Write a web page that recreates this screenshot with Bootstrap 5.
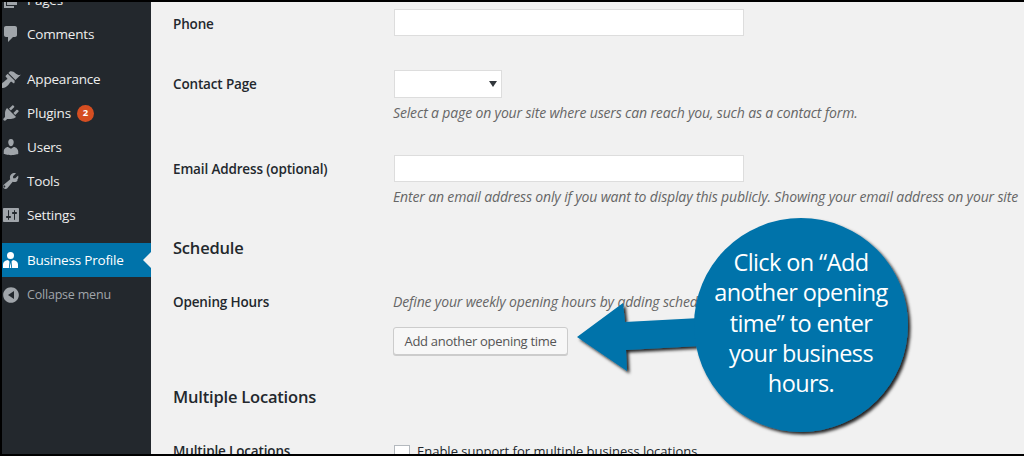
<!DOCTYPE html>
<html lang="en">
<head>
  <meta charset="utf-8">
  <title>Business Profile</title>
  <link href="https://cdn.jsdelivr.net/npm/bootstrap@5.3.0/dist/css/bootstrap.min.css" rel="stylesheet">
  <style>
    html, body { height: 456px; overflow: hidden; }
    body { font-family: "Open Sans", "Noto Sans", sans-serif; font-size: 13px; background: #000; }
    .shot-frame { height: 456px; padding: 2px 0 2px 2px; position: relative; }
    .shot-page { height: 100%; overflow: hidden; background: #f1f1f1; }
    .wp-side { width: 149px; background: #23282d; color: #eee; overflow: hidden; }
    .wp-menu { margin: -19px 0 0; padding: 0; list-style: none; }
    .wp-menu li { height: 34px; display: flex; align-items: center; position: relative; font-size: 13.5px; letter-spacing: -.2px; }
    .wp-menu li svg { width: 20px; height: 20px; margin: 0 6px 0 -1px; fill: #a0a5aa; flex: none; }
    .wp-menu li.menu-gap { margin-top: 11px; }
    .wp-menu li.menu-active { background: #0073aa; color: #fff; }
    .wp-menu li.menu-active svg { fill: #fff; }
    .wp-menu li.menu-active::after { content: ""; position: absolute; right: 0; top: 9px; border: 8px solid transparent; border-right-color: #f1f1f1; border-left: 0; }
    .wp-menu li.menu-collapse { color: #a0a5aa; font-size: 12.5px; padding-top: 2px; }
    .plugin-count { width: 17px; height: 17px; border-radius: 50%; background: #d54e21; color: #fff; font-size: 9.5px; font-weight: 700; margin-left: 6px; letter-spacing: 0; }
    .wp-main { padding-left: 22px; color: #23282d; min-width: 0; overflow: hidden; }
    .field-row { display: flex; }
    .field-label { width: 221px; flex: none; font-weight: 600; font-size: 13.5px; letter-spacing: -.15px; }
    .field-input { width: 350px; height: 27px; background: #fff; border: 1px solid #ddd; display: block; }
    .field-select { width: 108px; height: 28px; background: #fff; border: 1px solid #ddd; position: relative; }
    .field-select::after { content: ""; position: absolute; right: 4px; top: 10px; border: 4px solid transparent; border-top: 6px solid #32373c; border-bottom: 0; }
    .field-note { font-style: italic; font-size: 14px; color: #666; white-space: nowrap; letter-spacing: -.15px; margin-left: -1px; }
    .section-title { font-size: 16.5px; font-weight: 600; letter-spacing: -.2px; margin: 0; color: #23282d; line-height: 22px; }
    .add-time { height: 28px; width: 175px; background: #f7f7f7; border: 1px solid #ccc; border-radius: 3px; color: #555; font-size: 13px; padding: 0; letter-spacing: -.3px; box-shadow: 0 1px 0 #ccc; margin-left: -1px; }
    .fake-check { width: 16px; height: 16px; background: #fff; border: 1px solid #b4b9be; display: inline-block; flex: none; margin-top: 3px; }
    .callout-art { position: absolute; left: 0; top: 0; width: 1024px; height: 456px; pointer-events: none; }
    .callout-text { position: absolute; left: 695px; top: 247px; width: 212px; text-align: center; color: #fff; font-family: "Open Sans", sans-serif; font-size: 23.5px; line-height: 30.3px; letter-spacing: -.6px; }
    .phone-row { padding-top: 9px; line-height: 27px; }
    .phone-row .field-input { margin-top: -2px; }
    .contact-row { margin-top: 32px; line-height: 28px; }
    .contact-row .field-note { line-height: 18px; margin-top: 6px !important; }
    .email-row { margin-top: 33px; line-height: 27px; }
    .email-row .field-label { padding-top: 1px; }
    .email-row .field-note { line-height: 18px; margin-top: 6px !important; }
    .schedule-title { margin-top: 31px; }
    .hours-row { margin-top: 34px; line-height: 18px; }
    .hours-btn { margin-top: 16px; }
    .locations-title { margin-top: 31px; }
    .locations-row { margin-top: 34px; line-height: 18px; }
    .locations-check { gap: 7px; }
  </style>
</head>
<body>
  <div class="shot-frame">
    <div class="shot-page d-flex">
      <!-- admin menu -->
      <div class="wp-side flex-shrink-0">
        <ul class="wp-menu">
          <li>
            <svg viewBox="0 0 20 20"><path d="M6 15V2h10v13H6zm-1 1h8v2H3V5h2v11z"/></svg>
            <span>Pages</span>
          </li>
          <li>
            <svg viewBox="0 0 20 20"><path d="M5 2h9c1.100 0 2 .900 2 2v7c0 1.100-.900 2-2 2h-2l-5 5v-5H5c-1.100 0-2-.900-2-2V4c0-1.100.900-2 2-2z"/></svg>
            <span>Comments</span>
          </li>
          <li class="menu-gap">
            <svg viewBox="0 0 20 20"><path d="M14.480 11.060 7.410 3.990l1.500-1.500c.500-.560 2.300-.470 3.510.320 1.210.800 1.430 1.280 2.910 2.100 1.180.640 2.450 1.260 4.450.850zm-.710.710L6.700 4.700 4.930 6.470c-.390.390-.390 1.020 0 1.410l1.060 1.060c.390.390.390 1.030 0 1.420-.600.600-1.430 1.110-2.210 1.690-.350.260-.700.530-1.010.840C1.430 13.230 0 15.780 0 17c0 1.100.900 2 2 2 1.220 0 3.770-1.430 5.010-2.760.310-.310.580-.660.840-1.010.580-.780 1.090-1.610 1.690-2.210.390-.390 1.030-.390 1.420 0l1.060 1.060c.390.390 1.020.390 1.410 0z"/></svg>
            <span>Appearance</span>
          </li>
          <li>
            <svg viewBox="0 0 20 20"><path d="M13.110 4.360 9.870 7.600 8 5.730l3.240-3.240c.350-.340 1.050-.200 1.560.320.520.510.660 1.210.310 1.550zm-8 1.770.910-1.120 9.010 9.010-1.190.840c-.710.710-2.630 1.160-3.820 1.160H6.140L4.900 17.260c-.590.590-1.540.590-2.120 0-.590-.580-.590-1.530 0-2.120l1.240-1.240v-3.880c0-1.130.520-3.090 1.090-3.890zm7.260 3.970 3.240-3.240c.340-.350 1.040-.210 1.550.310.520.510.660 1.210.310 1.560l-3.240 3.250z"/></svg>
            <span>Plugins</span>
            <span class="plugin-count d-flex align-items-center justify-content-center">2</span>
          </li>
          <li>
            <svg viewBox="0 0 20 20"><path d="M10 9.250c-2.270 0-2.730-3.440-2.730-3.440C7 4.020 7.820 2 9.970 2c2.160 0 2.980 2.020 2.710 3.810 0 0-.410 3.440-2.680 3.440zm0 2.570L12.720 10c2.390 0 4.520 2.330 4.520 4.530v2.490s-3.650 1.130-7.240 1.130c-3.650 0-7.240-1.130-7.240-1.130v-2.490c0-2.250 1.940-4.480 4.150-4.480z"/></svg>
            <span>Users</span>
          </li>
          <li>
            <svg viewBox="0 0 20 20"><path fill-rule="evenodd" d="M16.680 9.770c-1.340 1.340-3.300 1.670-4.950.990l-5.410 6.520c-.990.990-2.590.990-3.580 0s-.990-2.590 0-3.570l6.520-5.420c-.680-1.650-.350-3.610.990-4.950 1.280-1.280 3.120-1.640 4.720-1.110l-2.900 2.900.070 2.090 2.090.070 2.900-2.900c.530 1.600.170 3.440-1.110 4.720zM4.100 16.170c.390-.390.390-1.030 0-1.420-.390-.390-1.030-.390-1.420 0-.390.390-.390 1.030 0 1.420.390.390 1.030.390 1.420 0z"/></svg>
            <span>Tools</span>
          </li>
          <li>
            <svg viewBox="0 0 20 20"><path fill-rule="evenodd" d="M18 16V4c0-.550-.450-1-1-1H3c-.550 0-1 .450-1 1v12c0 .550.450 1 1 1h14c.550 0 1-.450 1-1zM8 11h1c.550 0 1 .450 1 1s-.450 1-1 1H8v1.500c0 .280-.220.500-.500.500s-.500-.220-.500-.500V13H6c-.550 0-1-.450-1-1s.450-1 1-1h1V5.500c0-.280.220-.500.500-.500s.500.220.500.500V11zm5-2h-1c-.550 0-1-.450-1-1s.450-1 1-1h1V5.500c0-.280.220-.500.500-.500s.500.220.500.500V7h1c.550 0 1 .450 1 1s-.450 1-1 1h-1v5.500c0 .280-.220.500-.500.500s-.500-.220-.500-.500V9z"/></svg>
            <span>Settings</span>
          </li>
          <li class="menu-gap menu-active">
            <svg viewBox="0 0 20 20"><path fill-rule="evenodd" d="M9.500 2a3.500 3.500 0 1 1 0 7 3.500 3.500 0 0 1 0-7zM2 18v-3.500C2 12 4 10.500 7 10l1.500 1.500-.6 6.500zm15 0v-3.500c0-2.500-2-4-5-4.500l-1.500 1.500.6 6.500zM9.500 12.500l.8 5.500H8.700z"/></svg>
            <span class="text-nowrap">Business Profile</span>
          </li>
          <li class="menu-collapse">
            <svg viewBox="0 0 20 20"><path fill-rule="evenodd" d="M10 2.160c4.330 0 7.840 3.510 7.840 7.840s-3.510 7.840-7.840 7.840S2.160 14.330 2.160 10 5.670 2.160 10 2.160zM13 14V6l-6 4z"/></svg>
            <span class="text-nowrap">Collapse menu</span>
          </li>
        </ul>
      </div>

      <!-- settings form -->
      <div class="wp-main flex-grow-1">
        <div class="field-row align-items-start phone-row">
          <div class="field-label">Phone</div>
          <div class="field-input"></div>
        </div>
        <div class="field-row contact-row">
          <div class="field-label">Contact Page</div>
          <div>
            <div class="field-select"></div>
            <div class="field-note mt-2">Select a page on your site where users can reach you, such as a contact form.</div>
          </div>
        </div>
        <div class="field-row email-row">
          <div class="field-label">Email Address (optional)</div>
          <div>
            <div class="field-input"></div>
            <div class="field-note mt-2">Enter an email address only if you want to display this publicly. Showing your email address on your site</div>
          </div>
        </div>
        <h2 class="section-title schedule-title">Schedule</h2>
        <div class="field-row hours-row">
          <div class="field-label">Opening Hours</div>
          <div>
            <div class="field-note">Define your weekly opening hours by adding sched</div>
            <button type="button" class="add-time d-block hours-btn">Add another opening time</button>
          </div>
        </div>
        <h2 class="section-title locations-title">Multiple Locations</h2>
        <div class="field-row locations-row">
          <div class="field-label">Multiple Locations</div>
          <div class="d-flex locations-check align-items-start">
            <span class="fake-check"></span>
            <span>Enable support for multiple business locations</span>
          </div>
        </div>
      </div>
    </div>

    <!-- annotation over the page -->
    <svg class="callout-art" viewBox="0 0 1024 456">
      <defs>
        <filter id="callout-shadow" x="-10%" y="-10%" width="125%" height="125%">
          <feDropShadow dx="2.500" dy="2.500" stdDeviation="1.800" flood-color="#000" flood-opacity=".85"/>
        </filter>
      </defs>
      <g fill="#0073aa" filter="url(#callout-shadow)">
        <path d="M577 337 623 303 625 322 700 318 700 346 626 350 627 371z"/>
        <circle cx="801" cy="325" r="107"/>
      </g>
    </svg>
    <div class="callout-text">Click on “Add<br>another opening<br>time” to enter<br>your business<br>hours.</div>
  </div>
  <script src="https://cdn.jsdelivr.net/npm/bootstrap@5.3.0/dist/js/bootstrap.bundle.min.js"></script>
</body>
</html>
